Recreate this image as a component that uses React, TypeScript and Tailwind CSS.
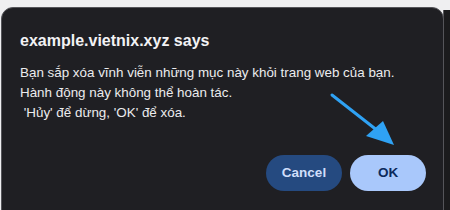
import React from "react";

export default function App() {
  return (
    <div className="relative w-[450px] h-[210px] overflow-hidden bg-[#efeff1]" style={{ fontFamily: '"Liberation Sans", Arial, sans-serif' }}>
      {/* window edge on the right behind the dialog */}
      <div className="absolute right-0 top-[10px] bottom-0 w-[7px] bg-[#1b1b1d] border-l border-[#5a5a5e]" />
      {/* dialog */}
      <div className="absolute left-[1px] top-[7px] w-[443px] h-[220px] rounded-[12px] bg-[#1f1f23] border border-[#55555a] flex flex-col pl-[18px] pr-[17px] pt-[22px]">
        <div className="text-[16px] font-bold text-[#f2f2f4] leading-[22px]">example.vietnix.xyz says</div>
        <div className="mt-[11px] text-[13.4px] leading-[20px] text-[#ececee]">
          <div>Bạn sắp xóa vĩnh viễn những mục này khỏi trang web của bạn.</div>
          <div>Hành động này không thể hoàn tác.</div>
          <div className="whitespace-pre"> 'Hủy' để dừng, 'OK' để xóa.</div>
        </div>
        <div className="flex justify-end gap-[8px] mt-[32px]">
          <button className="w-[76px] h-[36px] rounded-full bg-[#254a80] text-[#d0defa] text-[13.5px] font-bold">Cancel</button>
          <button className="w-[76px] h-[36px] rounded-full bg-[#a9c8fb] text-[#0b2a5c] text-[13.5px] font-bold">OK</button>
        </div>
      </div>
      {/* annotation arrow */}
      <svg className="absolute left-0 top-0" width="450" height="210" viewBox="0 0 450 210">
        <line x1="332" y1="95" x2="378" y2="131" stroke="#2fa2f4" strokeWidth="3" strokeLinecap="round" />
        <polygon points="394,145 366,136 383,121" fill="#2fa2f4" />
      </svg>
    </div>
  );
}
